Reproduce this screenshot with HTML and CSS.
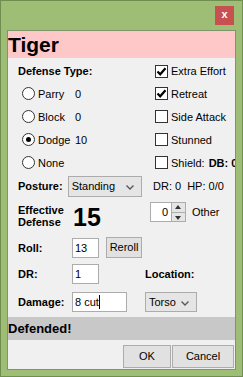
FILE: index.html
```html
<!DOCTYPE html>
<html>
<head>
<meta charset="utf-8">
<link rel="stylesheet" href="styles.css">
</head>
<body>
<div class="frame">
  <div class="titlebar"><div class="close">x</div></div>
  <div class="panel">
    <div class="header">Tiger</div>
    <div class="top">
      <div class="cell"><span class="b">Defense Type:</span></div>
      <div class="cell rc"><span class="cb"><svg width="11" height="11" viewBox="0 0 11 11"><path d="M1.5 5.5 L4.2 8.3 L9.5 2.2" fill="none" stroke="#000" stroke-width="2.2"/></svg></span><span>Extra Effort</span></div>

      <div class="cell lr"><span class="radio"></span><span class="rl">Parry</span><span>0</span></div>
      <div class="cell rc"><span class="cb"><svg width="11" height="11" viewBox="0 0 11 11"><path d="M1.5 5.5 L4.2 8.3 L9.5 2.2" fill="none" stroke="#000" stroke-width="2.2"/></svg></span><span>Retreat</span></div>

      <div class="cell lr"><span class="radio"></span><span class="rl">Block</span><span>0</span></div>
      <div class="cell rc"><span class="cb"></span><span>Side Attack</span></div>

      <div class="cell lr"><span class="radio on"></span><span class="rl">Dodge</span><span>10</span></div>
      <div class="cell rc"><span class="cb"></span><span>Stunned</span></div>

      <div class="cell lr"><span class="radio"></span><span class="rl">None</span></div>
      <div class="cell rc"><span class="cb"></span><span>Shield:</span><span class="b db">DB: 0</span></div>

      <div class="cell"><span class="b">Posture:</span><span class="select posture">Standing<svg class="chev" width="8" height="5" viewBox="0 0 8 5"><path d="M0.5 0.5 L4 4 L7.5 0.5" fill="none" stroke="#555" stroke-width="1.3"/></svg></span></div>
      <div class="cell dr"><span>DR: 0</span><span class="hp">HP: 0/0</span></div>
    </div>

    <div class="lower">
      <div class="row eff">
        <div class="lab b">Effective<br>Defense</div>
        <div class="big">15</div>
        <div class="spin"><span class="sv">0</span><span class="sb"><span class="up"></span><span class="dn"></span></span></div>
        <div class="other">Other</div>
      </div>
      <div class="row roll">
        <div class="lab b">Roll:</div>
        <div class="input small">13</div>
        <div class="btn reroll">Reroll</div>
      </div>
      <div class="row drrow">
        <div class="lab b">DR:</div>
        <div class="input small">1</div>
        <div class="b loc">Location:</div>
      </div>
      <div class="row dmg">
        <div class="lab b">Damage:</div>
        <div class="input wide">8 cut<span class="caret"></span></div>
        <span class="select torso">Torso<svg class="chev" width="8" height="5" viewBox="0 0 8 5"><path d="M0.5 0.5 L4 4 L7.5 0.5" fill="none" stroke="#555" stroke-width="1.3"/></svg></span>
      </div>
    </div>

    <div class="status">Defended!</div>
    <div class="buttons">
      <div class="btn ok">OK</div>
      <div class="btn cancel">Cancel</div>
    </div>
  </div>
</div>
</body>
</html>
```

FILE: styles.css
```css
html, body {
  margin: 0;
  padding: 0;
}
body {
  font-family: "Liberation Sans", Arial, sans-serif;
  font-size: 11px;
  color: #000;
}
.frame {
  box-sizing: border-box;
  width: 243px;
  height: 377px;
  background: #9ebd75;
  border: 1px solid #6f8e50;
  overflow: hidden;
}
.titlebar {
  height: 29px;
  position: relative;
}
.close {
  position: absolute;
  left: 214px;
  top: 5px;
  width: 19px;
  height: 19px;
  background: #c75050;
  color: #fff;
  font-weight: bold;
  font-size: 11px;
  line-height: 17px;
  text-align: center;
}
.panel {
  box-sizing: border-box;
  margin: 0 6px;
  height: 340px;
  border: 1px solid #7f946c;
  background: #f0f0f0;
  overflow: hidden;
}
.header {
  height: 27px;
  background: #ffc8c8;
  font-weight: bold;
  font-size: 21px;
  line-height: 28px;
  padding-left: 0;
}
.b { font-weight: bold; }
.top {
  display: grid;
  grid-template-columns: 135px 1fr;
  grid-template-rows: 22px 23px 23px 23px 23px 24px;
  padding-left: 10px;
  margin-top: 2px;
  white-space: nowrap;
}
.cell {
  display: flex;
  align-items: center;
}
.lr { padding-left: 4px; }
.radio {
  box-sizing: border-box;
  width: 13px;
  height: 13px;
  border: 1px solid #333;
  border-radius: 50%;
  background: #fff;
  margin-right: 3px;
  display: flex;
  align-items: center;
  justify-content: center;
}
.radio.on::after {
  content: "";
  width: 5px;
  height: 5px;
  border-radius: 50%;
  background: #000;
}
.rl { width: 37px; }
.rc { padding-left: 2px; }
.cb {
  box-sizing: border-box;
  width: 13px;
  height: 13px;
  border: 1px solid #333;
  background: #fff;
  margin-right: 3px;
  display: flex;
  align-items: center;
  justify-content: center;
}
.cb svg { display: block; }
.db { margin-left: 4px; }
.select {
  box-sizing: border-box;
  display: flex;
  align-items: center;
  height: 21px;
  border: 1px solid #acacac;
  background: #e5e5e5;
  padding-left: 3px;
  position: relative;
}
.posture {
  width: 74px;
  margin-left: 5px;
}
.chev {
  position: absolute;
  right: 7px;
  top: 8px;
}
.dr { padding-left: 0; }
.hp { margin-left: 6px; }
.lower {
  padding-left: 10px;
}
.row {
  display: flex;
  align-items: center;
  white-space: nowrap;
}
.lab { width: 54px; flex: none; }
.eff {
  height: 28px;
  margin-top: 4px;
}
.eff .lab { line-height: 12px; }
.big {
  font-weight: bold;
  font-size: 25px;
  width: 78px;
  padding-left: 1px;
  box-sizing: border-box;
  margin-top: 2px;
}
.spin {
  box-sizing: border-box;
  width: 36px;
  height: 20px;
  border: 1px solid #acacac;
  background: #fff;
  display: flex;
  align-self: flex-start;
  margin-top: 0;
}
.sv {
  flex: 1;
  text-align: right;
  line-height: 18px;
  padding-right: 3px;
}
.sb {
  width: 13px;
  display: flex;
  flex-direction: column;
  background: #e5e5e5;
  border-left: 1px solid #acacac;
}
.sb span {
  flex: 1;
  position: relative;
}
.sb .up { border-bottom: 1px solid #acacac; }
.sb .up::after, .sb .dn::after {
  content: "";
  position: absolute;
  left: 3px;
  border-left: 3px solid transparent;
  border-right: 3px solid transparent;
}
.sb .up::after { top: 2px; border-bottom: 4px solid #333; }
.sb .dn::after { top: 3px; border-top: 4px solid #333; }
.other {
  margin-left: 6px;
  align-self: flex-start;
  line-height: 20px;
}
.input {
  box-sizing: border-box;
  height: 20px;
  border: 1px solid #acacac;
  background: #fff;
  line-height: 18px;
  padding-left: 2px;
  position: relative;
}
.small { width: 27px; }
.wide { width: 55px; }
.caret {
  display: inline-block;
  width: 1px;
  height: 14px;
  background: #000;
  vertical-align: -3px;
}
.btn {
  box-sizing: border-box;
  border: 1px solid #acacac;
  background: #e1e1e1;
  text-align: center;
}
.roll {
  margin-top: 7px;
  height: 21px;
}
.reroll {
  margin-left: 7px;
  width: 36px;
  height: 21px;
  line-height: 19px;
}
.drrow {
  margin-top: 6px;
  height: 20px;
}
.loc { margin-left: 46px; }
.dmg {
  margin-top: 8px;
  height: 20px;
}
.torso {
  width: 52px;
  margin-left: 18px;
  height: 20px;
}
.status {
  margin-top: 5px;
  height: 23px;
  background: #c8c8c8;
  font-weight: bold;
  font-size: 13px;
  line-height: 23px;
}
.buttons {
  display: flex;
  justify-content: flex-end;
  gap: 1px;
  margin-top: 5px;
  padding-right: 1px;
}
.buttons .btn {
  height: 23px;
  line-height: 21px;
}
.ok { width: 48px; }
.cancel { width: 62px; }
```
